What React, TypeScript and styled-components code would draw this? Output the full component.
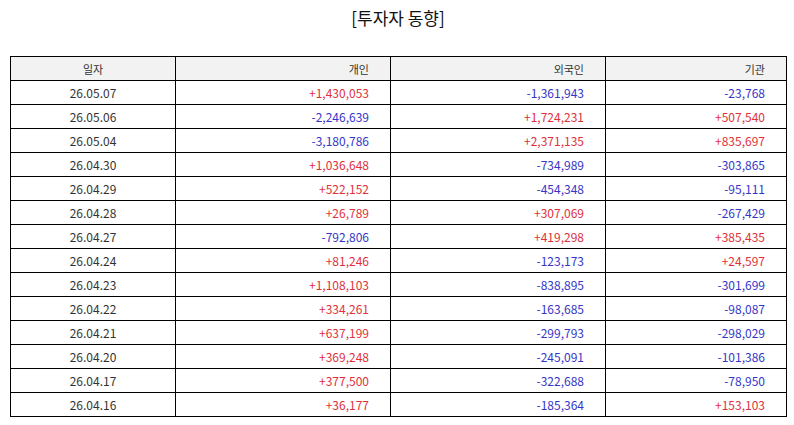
import React from "react";
import styled, { createGlobalStyle } from "styled-components";

const Global = createGlobalStyle`
  html, body { margin: 0; padding: 0; background: #ffffff; }
  body { font-family: "Noto Sans CJK KR", "Noto Sans", sans-serif; }
`;

const Page = styled.div`
  width: 794px;
  padding: 0 8px 0 10px;
  box-sizing: border-box;
`;

const Title = styled.h1`
  margin: 0;
  height: 56px;
  padding-top: 6px;
  box-sizing: border-box;
  text-align: center;
  font-size: 17px;
  font-weight: 400;
  line-height: 24px;
  color: #111;
`;

const Table = styled.table`
  width: 776px;
  border-collapse: collapse;
  table-layout: fixed;
  font-size: 12px;
  color: #333;
`;

const HeadCell = styled.th<{ $align: "center" | "right" }>`
  height: 23px;
  padding: 0 ${(p) => (p.$align === "right" ? "21px" : "0")} 0 0;
  border: 1px solid #000;
  background: #f2f2f2;
  font-weight: 400;
  font-size: 11px;
  text-align: ${(p) => p.$align};
  line-height: 22px;
`;

const Cell = styled.td<{ $tone?: "up" | "down" | "none" }>`
  height: 23px;
  padding: 0 21px 0 0;
  border: 1px solid #000;
  text-align: right;
  line-height: 22px;
  color: ${(p) => (p.$tone === "up" ? "#e0303a" : p.$tone === "down" ? "#3535c8" : "#333")};
`;

const DateCell = styled(Cell)`
  padding: 0;
  text-align: center;
`;

const rows: [string, string, string, string][] = [
  ["26.05.07", "+1,430,053", "-1,361,943", "-23,768"],
  ["26.05.06", "-2,246,639", "+1,724,231", "+507,540"],
  ["26.05.04", "-3,180,786", "+2,371,135", "+835,697"],
  ["26.04.30", "+1,036,648", "-734,989", "-303,865"],
  ["26.04.29", "+522,152", "-454,348", "-95,111"],
  ["26.04.28", "+26,789", "+307,069", "-267,429"],
  ["26.04.27", "-792,806", "+419,298", "+385,435"],
  ["26.04.24", "+81,246", "-123,173", "+24,597"],
  ["26.04.23", "+1,108,103", "-838,895", "-301,699"],
  ["26.04.22", "+334,261", "-163,685", "-98,087"],
  ["26.04.21", "+637,199", "-299,793", "-298,029"],
  ["26.04.20", "+369,248", "-245,091", "-101,386"],
  ["26.04.17", "+377,500", "-322,688", "-78,950"],
  ["26.04.16", "+36,177", "-185,364", "+153,103"],
];

const tone = (v: string) => (v.startsWith("+") ? "up" : v.startsWith("-") ? "down" : "none");

export default function App() {
  return (
    <Page>
      <Global />
      <Title>[투자자 동향]</Title>
      <Table>
        <colgroup>
          <col style={{ width: 165 }} />
          <col style={{ width: 215 }} />
          <col style={{ width: 215 }} />
          <col style={{ width: 181 }} />
        </colgroup>
        <thead>
          <tr>
            <HeadCell $align="center">일자</HeadCell>
            <HeadCell $align="right">개인</HeadCell>
            <HeadCell $align="right">외국인</HeadCell>
            <HeadCell $align="right">기관</HeadCell>
          </tr>
        </thead>
        <tbody>
          {rows.map((r) => (
            <tr key={r[0]}>
              <DateCell>{r[0]}</DateCell>
              <Cell $tone={tone(r[1])}>{r[1]}</Cell>
              <Cell $tone={tone(r[2])}>{r[2]}</Cell>
              <Cell $tone={tone(r[3])}>{r[3]}</Cell>
            </tr>
          ))}
        </tbody>
      </Table>
    </Page>
  );
}
